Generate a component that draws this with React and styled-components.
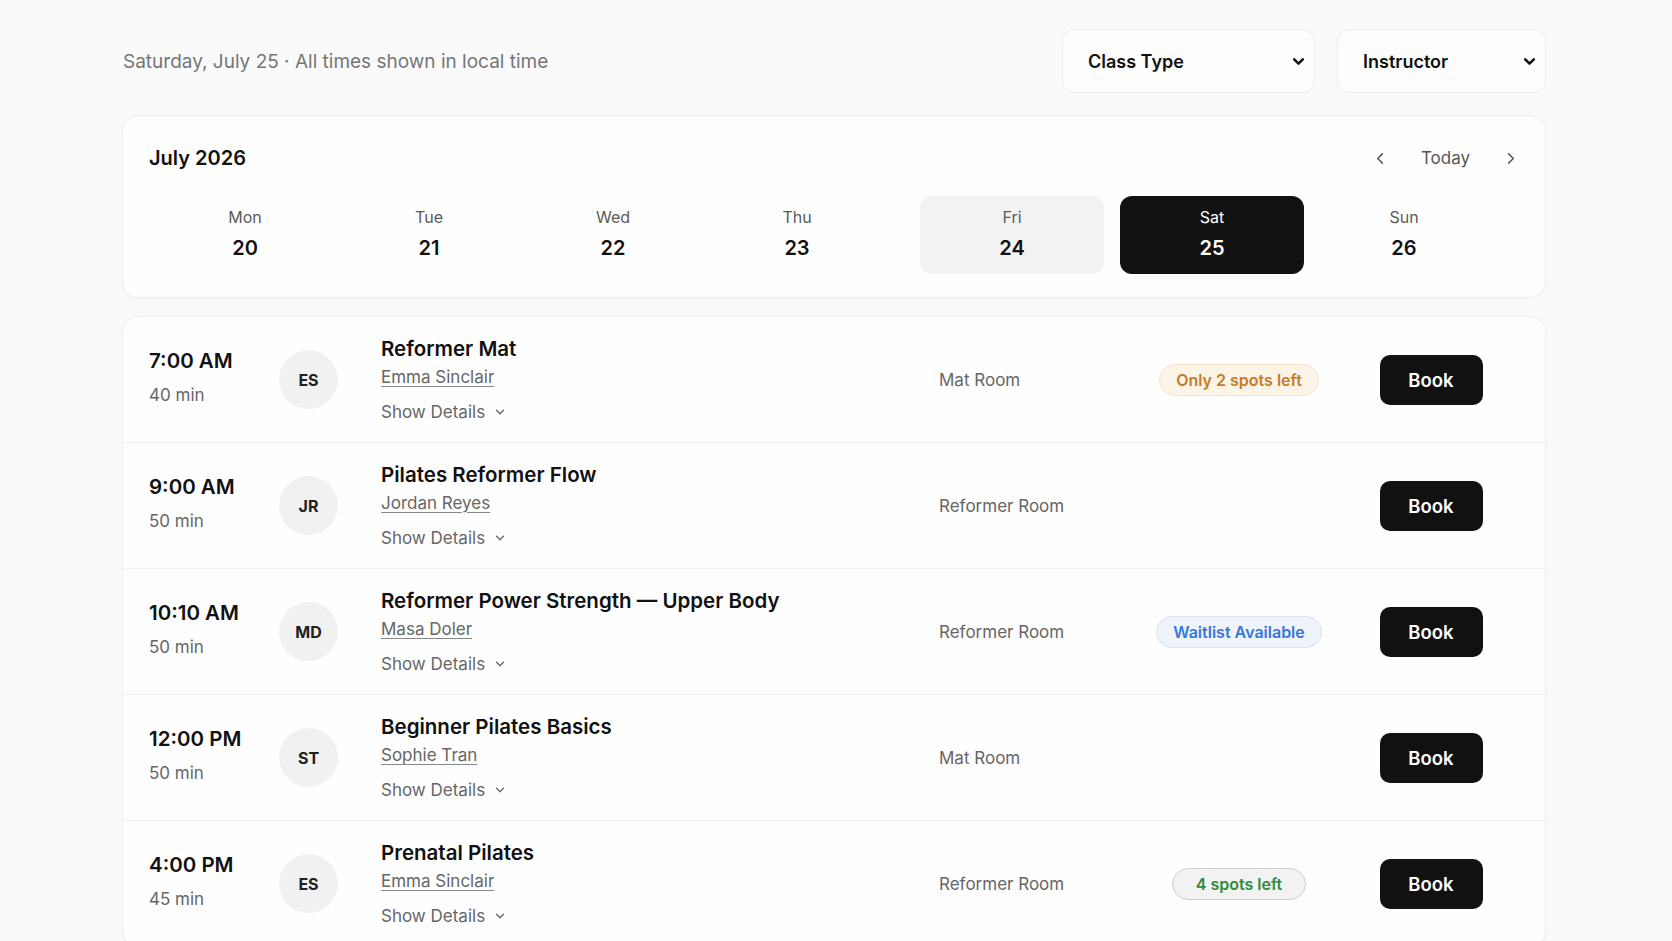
import React from 'react';
import styled, { createGlobalStyle } from 'styled-components';

const GlobalStyle = createGlobalStyle`
    html, body {
        margin: 0;
        padding: 0;
        background: #fafafa;
        font-family: Inter, "Noto Sans", "Liberation Sans", sans-serif;
        color: #111;
    }
`;

const Page = styled.div`
    width: 1424px;
    margin-left: 122px;
    padding-top: 29px;
`;

const TopBar = styled.div`
    display: flex;
    align-items: center;
    justify-content: space-between;
    height: 64px;
`;

const DateNote = styled.div`
    font-size: 19px;
    color: #767676;
    padding-left: 1px;
`;

const Filters = styled.div`
    display: flex;
    gap: 22px;
`;

const Select = styled.div`
    width: ${p => p.w}px;
    height: 64px;
    box-sizing: border-box;
    display: flex;
    align-items: center;
    justify-content: space-between;
    padding: 0 8px 0 25px;
    background: #fdfdfd;
    border: 1px solid #ececec;
    border-radius: 12px;
    font-size: 18px;
    font-weight: 600;
    color: #111;
`;

const Card = styled.div`
    margin-top: ${p => p.mt}px;
    background: #fefefe;
    border: 1px solid #eeeeee;
    border-radius: 16px;
    box-shadow: 0 1px 3px rgba(0, 0, 0, 0.03);
`;

const CalendarCard = styled(Card)`
    padding: 27px 26px 23px;
`;

const CalHead = styled.div`
    display: flex;
    align-items: center;
    justify-content: space-between;
    height: 30px;
`;

const Month = styled.div`
    font-size: 20px;
    font-weight: 600;
`;

const Nav = styled.div`
    display: flex;
    align-items: center;
    gap: 33px;
    padding-right: 2px;
    color: #555;
    font-size: 17px;
`;

const NavArrow = styled.span`
    display: flex;
    width: 14px;
    justify-content: center;
`;

const DayStrip = styled.div`
    display: flex;
    gap: 31px;
    margin-top: 23px;
    padding-left: 4px;
`;

const DayGroup = styled.div`
    display: flex;
    gap: ${p => p.gap}px;
`;

const DayCell = styled.div`
    width: ${p => p.w || 184}px;
    height: 78px;
    border-radius: 12px;
    display: flex;
    flex-direction: column;
    align-items: center;
    justify-content: center;
    gap: 9px;
    padding-bottom: 3px;
    box-sizing: border-box;
    background: ${p => (p.active ? '#111' : p.soft ? '#f2f2f2' : 'transparent')};
    color: ${p => (p.active ? '#fff' : '#111')};
`;

const DayName = styled.div`
    font-size: 16px;
    color: ${p => (p.active ? '#fff' : '#5a5a5a')};
`;

const DayNum = styled.div`
    font-size: 20px;
    font-weight: 600;
`;

const ListCard = styled(Card)`
    overflow: hidden;
`;

const Row = styled.div`
    display: grid;
    grid-template-columns: 130px 102px 558px 200px 200px 1fr;
    align-items: center;
    padding: 18px 22px 18px 26px;
    border-top: ${p => (p.first ? 'none' : '1px solid #f0f0f0')};
`;

const TimeBlock = styled.div`
    display: flex;
    flex-direction: column;
    gap: 8px;
    margin-top: -6px;
`;

const Time = styled.div`
    font-size: 20.5px;
    font-weight: 600;
    line-height: 28px;
`;

const Duration = styled.div`
    font-size: 17px;
    line-height: 24px;
    color: #666;
`;

const Avatar = styled.div`
    width: 59px;
    height: 59px;
    border-radius: 50%;
    background: #f1f1f1;
    display: flex;
    align-items: center;
    justify-content: center;
    font-size: 16px;
    font-weight: 700;
    color: #222;
`;

const Details = styled.div`
    display: flex;
    flex-direction: column;
`;

const Title = styled.div`
    font-size: 20.5px;
    font-weight: 600;
    line-height: 28px;
`;

const Teacher = styled.a`
    margin-top: 2px;
    font-size: 17px;
    line-height: 24px;
    color: #666;
    text-decoration: underline;
    text-underline-offset: 3px;
    text-decoration-color: #888;
    align-self: flex-start;
`;

const ShowDetails = styled.div`
    margin-top: 11px;
    display: flex;
    align-items: center;
    gap: 9px;
    font-size: 17px;
    line-height: 24px;
    color: #666;
`;

const Room = styled.div`
    font-size: 17px;
    color: #666;
`;

const BadgeCell = styled.div`
    display: flex;
    justify-content: center;
`;

const tones = {
    warn: { bg: '#fdf4e8', border: '#f5e3cb', fg: '#c77a2a', pad: 16 },
    info: { bg: '#eff3fa', border: '#d9e2ef', fg: '#3577db', pad: 16 },
    ok: { bg: '#f1f2f1', border: '#cdd2cd', fg: '#2f8c3c', pad: 23 },
};

const Badge = styled.span`
    height: 32px;
    box-sizing: border-box;
    display: inline-flex;
    align-items: center;
    border-radius: 999px;
    font-size: 16px;
    font-weight: 600;
    background: ${p => tones[p.tone].bg};
    border: 1px solid ${p => tones[p.tone].border};
    color: ${p => tones[p.tone].fg};
    padding: 0 ${p => tones[p.tone].pad}px;
`;

const BookButton = styled.button`
    justify-self: center;
    width: 103px;
    height: 50px;
    border: none;
    border-radius: 10px;
    background: #111;
    color: #fff;
    font-family: inherit;
    font-size: 18.5px;
    font-weight: 600;
    cursor: pointer;
`;

const Chevron = ({ dir = 'down', size = 12, width = 2, color = 'currentColor' }) => {
    const paths = {
        down: 'M3 5l4 4 4-4',
        left: 'M9 2L4 7l5 5',
        right: 'M5 2l5 5-5 5',
    };
    return (
        <svg width={size} height={size} viewBox="0 0 14 14" fill="none">
            <path d={paths[dir]} stroke={color} strokeWidth={width} strokeLinecap="round" strokeLinejoin="round" />
        </svg>
    );
};

const days = [
    { name: 'Mon', num: 20 },
    { name: 'Tue', num: 21 },
    { name: 'Wed', num: 22 },
    { name: 'Thu', num: 23 },
];

const classes = [
    { time: '7:00 AM', dur: '40 min', ini: 'ES', title: 'Reformer Mat', teacher: 'Emma Sinclair', room: 'Mat Room', badge: { tone: 'warn', text: 'Only 2 spots left' } },
    { time: '9:00 AM', dur: '50 min', ini: 'JR', title: 'Pilates Reformer Flow', teacher: 'Jordan Reyes', room: 'Reformer Room' },
    { time: '10:10 AM', dur: '50 min', ini: 'MD', title: 'Reformer Power Strength — Upper Body', teacher: 'Masa Doler', room: 'Reformer Room', badge: { tone: 'info', text: 'Waitlist Available' } },
    { time: '12:00 PM', dur: '50 min', ini: 'ST', title: 'Beginner Pilates Basics', teacher: 'Sophie Tran', room: 'Mat Room' },
    { time: '4:00 PM', dur: '45 min', ini: 'ES', title: 'Prenatal Pilates', teacher: 'Emma Sinclair', room: 'Reformer Room', badge: { tone: 'ok', text: '4 spots left' } },
];

export default function App() {
    return (
        <React.Fragment>
            <GlobalStyle />
            <Page>
                <TopBar>
                    <DateNote>Saturday, July 25 · All times shown in local time</DateNote>
                    <Filters>
                        <Select w={253}>Class Type <Chevron size={15} width={2.4} /></Select>
                        <Select w={209}>Instructor <Chevron size={15} width={2.4} /></Select>
                    </Filters>
                </TopBar>

                <CalendarCard mt={22}>
                    <CalHead>
                        <Month>July 2026</Month>
                        <Nav>
                            <NavArrow><Chevron dir="left" size={13} width={1.6} /></NavArrow>
                            <span>Today</span>
                            <NavArrow><Chevron dir="right" size={13} width={1.6} /></NavArrow>
                        </Nav>
                    </CalHead>
                    <DayStrip>
                        <DayGroup gap={0}>
                            {days.map(d => (
                                <DayCell key={d.num}>
                                    <DayName>{d.name}</DayName>
                                    <DayNum>{d.num}</DayNum>
                                </DayCell>
                            ))}
                        </DayGroup>
                        <DayGroup gap={16}>
                            <DayCell soft>
                                <DayName>Fri</DayName>
                                <DayNum>24</DayNum>
                            </DayCell>
                            <DayCell active>
                                <DayName active>Sat</DayName>
                                <DayNum>25</DayNum>
                            </DayCell>
                            <DayCell w={168}>
                                <DayName>Sun</DayName>
                                <DayNum>26</DayNum>
                            </DayCell>
                        </DayGroup>
                    </DayStrip>
                </CalendarCard>

                <ListCard mt={18}>
                    {classes.map((c, i) => (
                        <Row key={i} first={i === 0}>
                            <TimeBlock>
                                <Time>{c.time}</Time>
                                <Duration>{c.dur}</Duration>
                            </TimeBlock>
                            <Avatar>{c.ini}</Avatar>
                            <Details>
                                <Title>{c.title}</Title>
                                <Teacher>{c.teacher}</Teacher>
                                <ShowDetails>Show Details <Chevron size={12} width={1.5} /></ShowDetails>
                            </Details>
                            <Room>{c.room}</Room>
                            <BadgeCell>
                                {c.badge ? <Badge tone={c.badge.tone}>{c.badge.text}</Badge> : null}
                            </BadgeCell>
                            <BookButton>Book</BookButton>
                        </Row>
                    ))}
                </ListCard>
            </Page>
        </React.Fragment>
    );
}
